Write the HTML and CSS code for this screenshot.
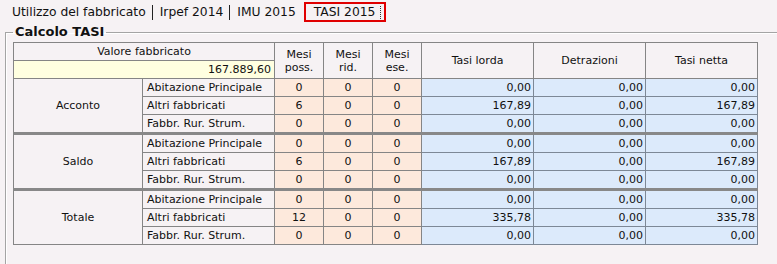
FILE: index.html
```html
<!DOCTYPE html>
<html lang="it">
<head>
    <meta charset="UTF-8">
    <title>Calcolo TASI</title>
    <link rel="stylesheet" href="styles.css">
</head>
<body>
    <div class="tabs">
        <span class="tab">Utilizzo del fabbricato</span>
        <span class="tab">Irpef 2014</span>
        <span class="tab last">IMU 2015</span>
        <span class="tab active"><span class="focus">TASI 2015</span></span>
    </div>
    <fieldset class="panel">
        <legend>Calcolo TASI</legend>
        <table class="calc">
            <colgroup>
                <col style="width:129px">
                <col style="width:132px">
                <col style="width:49px">
                <col style="width:49px">
                <col style="width:49px">
                <col style="width:112px">
                <col style="width:112px">
                <col style="width:112px">
            </colgroup>
            <thead>
                <tr>
                    <th colspan="2">Valore fabbricato</th>
                    <th rowspan="2">Mesi<br>poss.</th>
                    <th rowspan="2">Mesi<br>rid.</th>
                    <th rowspan="2">Mesi<br>ese.</th>
                    <th rowspan="2">Tasi lorda</th>
                    <th rowspan="2">Detrazioni</th>
                    <th rowspan="2">Tasi netta</th>
                </tr>
                <tr>
                    <td colspan="2" class="value">167.889,60</td>
                </tr>
            </thead>
            <tbody class="group">
                <tr>
                    <td rowspan="3" class="label">Acconto</td>
                    <td class="kind">Abitazione Principale</td>
                    <td class="month">0</td><td class="month">0</td><td class="month">0</td>
                    <td class="money">0,00</td><td class="money">0,00</td><td class="money">0,00</td>
                </tr>
                <tr>
                    <td class="kind">Altri fabbricati</td>
                    <td class="month">6</td><td class="month">0</td><td class="month">0</td>
                    <td class="money">167,89</td><td class="money">0,00</td><td class="money">167,89</td>
                </tr>
                <tr>
                    <td class="kind">Fabbr. Rur. Strum.</td>
                    <td class="month">0</td><td class="month">0</td><td class="month">0</td>
                    <td class="money">0,00</td><td class="money">0,00</td><td class="money">0,00</td>
                </tr>
            </tbody>
            <tbody class="group split">
                <tr>
                    <td rowspan="3" class="label">Saldo</td>
                    <td class="kind">Abitazione Principale</td>
                    <td class="month">0</td><td class="month">0</td><td class="month">0</td>
                    <td class="money">0,00</td><td class="money">0,00</td><td class="money">0,00</td>
                </tr>
                <tr>
                    <td class="kind">Altri fabbricati</td>
                    <td class="month">6</td><td class="month">0</td><td class="month">0</td>
                    <td class="money">167,89</td><td class="money">0,00</td><td class="money">167,89</td>
                </tr>
                <tr>
                    <td class="kind">Fabbr. Rur. Strum.</td>
                    <td class="month">0</td><td class="month">0</td><td class="month">0</td>
                    <td class="money">0,00</td><td class="money">0,00</td><td class="money">0,00</td>
                </tr>
            </tbody>
            <tbody class="group split">
                <tr>
                    <td rowspan="3" class="label">Totale</td>
                    <td class="kind">Abitazione Principale</td>
                    <td class="month">0</td><td class="month">0</td><td class="month">0</td>
                    <td class="money">0,00</td><td class="money">0,00</td><td class="money">0,00</td>
                </tr>
                <tr>
                    <td class="kind">Altri fabbricati</td>
                    <td class="month">12</td><td class="month">0</td><td class="month">0</td>
                    <td class="money">335,78</td><td class="money">0,00</td><td class="money">335,78</td>
                </tr>
                <tr>
                    <td class="kind">Fabbr. Rur. Strum.</td>
                    <td class="month">0</td><td class="month">0</td><td class="month">0</td>
                    <td class="money">0,00</td><td class="money">0,00</td><td class="money">0,00</td>
                </tr>
            </tbody>
        </table>
    </fieldset>
</body>
</html>
```

FILE: styles.css
```css
html, body {
    margin: 0;
    height: 100%;
    overflow: hidden;
}
body {
    font-family: 'DejaVu Sans', Verdana, sans-serif;
    background-color: #f6f2f4;
    color: #111;
}
.tabs {
    display: flex;
    align-items: center;
    height: 20px;
    padding: 2px 0 2px 12px;
    font-size: 12.3px;
}
.tab {
    padding: 0 6px 0 0;
    margin-right: 7px;
    border-right: 1px solid #222;
    line-height: 15px;
}
.tab.last {
    border-right: none;
    padding-right: 0;
    margin-right: 8px;
}
.tab.active {
    border: 2px solid #e00000;
    padding: 0 3px 0 8px;
    margin: 0;
    line-height: 16px;
}
.tab.active .focus {
    display: inline-block;
    padding-right: 5px;
    border-right: 1px dotted #333;
    line-height: 13px;
}
.panel {
    margin: 0 0 0 5px;
    padding: 2px 0 0 7px;
    width: 800px;
    height: 250px;
    border: 1px solid #a4a4a4;
    box-shadow: inset 1px 1px 0 #fff;
}
.panel legend {
    margin-left: 0;
    padding: 0 2px;
    font-weight: bold;
    font-size: 13px;
    line-height: 16px;
}
.calc {
    border-collapse: collapse;
    table-layout: fixed;
    width: 745px;
    font-size: 11px;
    border: 1px solid #5c5c5c;
}
.calc th, .calc td {
    border: 1px solid #858585;
    padding: 0;
    height: 17px;
    line-height: 13px;
}
.calc th {
    font-weight: normal;
    text-align: center;
    vertical-align: middle;
}
.calc .value {
    background: #ffffe0;
    text-align: right;
    padding-right: 3px;
}
.calc .label {
    text-align: center;
}
.calc .kind {
    padding-left: 4px;
}
.calc .month {
    background: #fde9dc;
    text-align: center;
}
.calc .money {
    background: #dceafb;
    text-align: right;
    padding-right: 2px;
    border-color: #7d8896;
}
.calc .split {
    border-top: 3px solid #888;
}
```
